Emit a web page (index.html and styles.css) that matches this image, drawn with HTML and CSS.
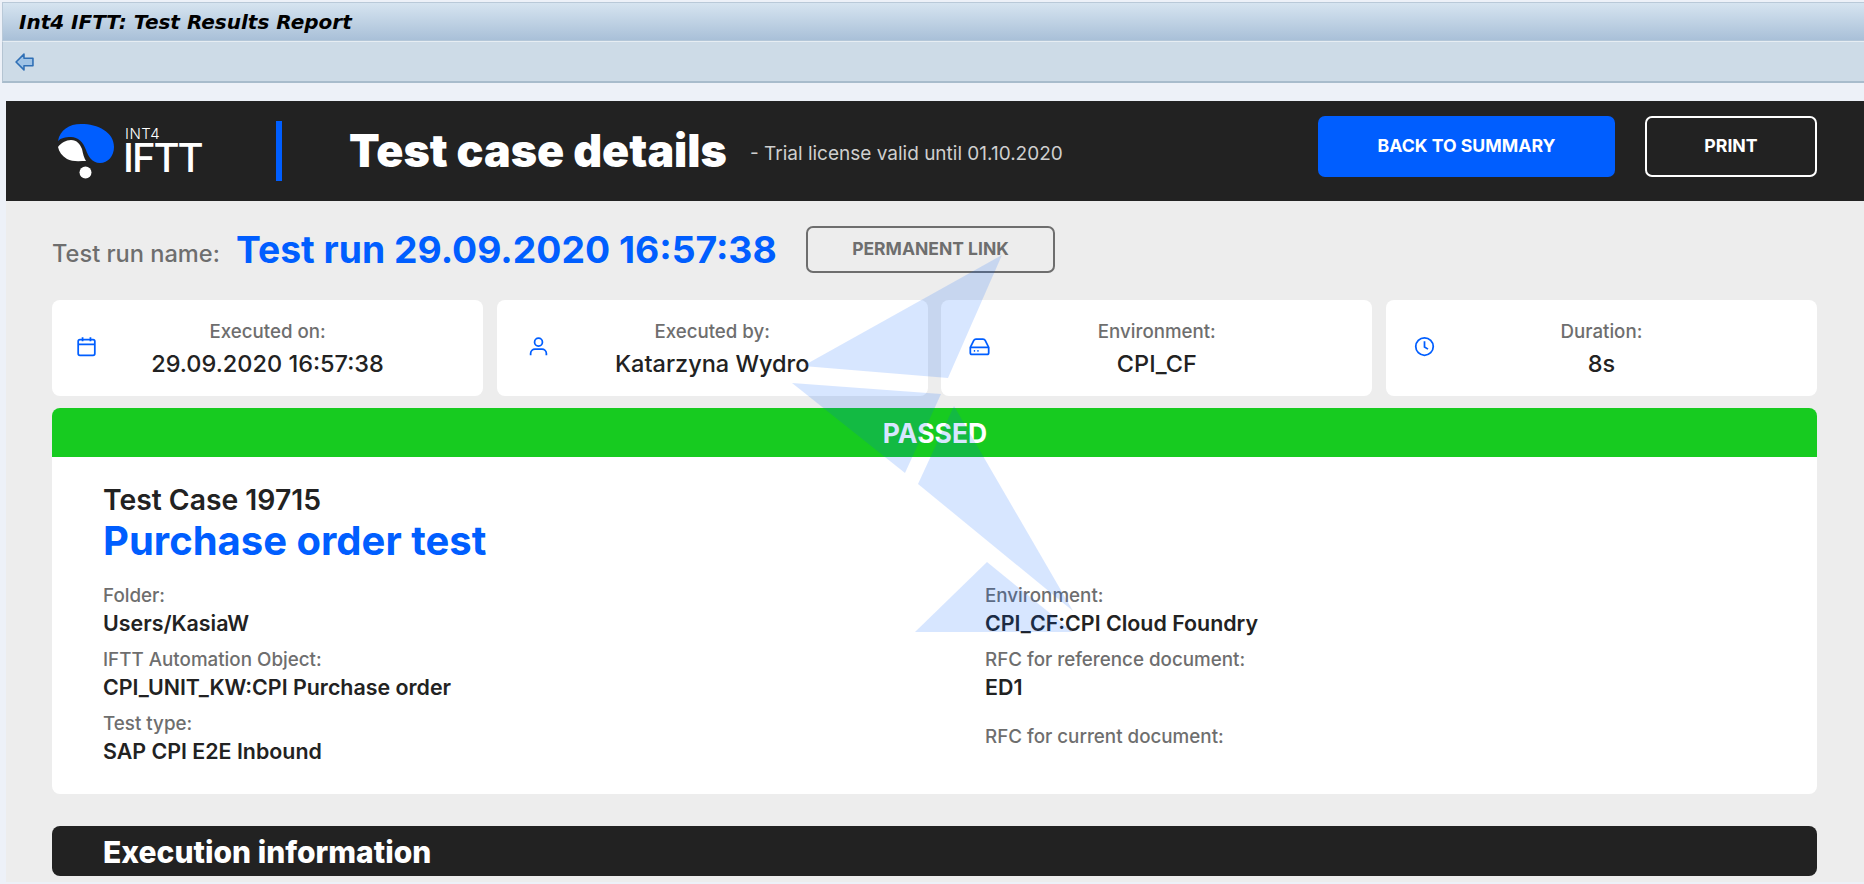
FILE: index.html
```html
<!DOCTYPE html>
<html lang="en">
<head>
<meta charset="utf-8">
<title>Int4 IFTT: Test Results Report</title>
<link rel="stylesheet" href="styles.css">
</head>
<body>
<div class="sap-title">Int4 IFTT: Test Results Report</div>
<div class="sap-toolbar">
  <svg class="sap-back" viewBox="0 0 18 17" aria-hidden="true"><path d="M8.5 1 1 8.5 8.5 16V12H17V5H8.5Z" fill="#9fc3e6" stroke="#2f6fb5" stroke-width="1.5" stroke-linejoin="round"/></svg>
</div>
<main class="page">
  <header class="top">
    <div class="logo">
      <svg class="logo-mark" viewBox="58 125 56 56" aria-hidden="true">
        <path d="M58 143C60 132 69 126 81 126C98 126 114 134 114 149C114 158 108 165 100 165C92 165 88 158 86 152C83 144 78 139 71 139C65 139 61 140 58 143Z" fill="#005eff"/>
        <path d="M58 149C61 145 66 142 71 142C77 142 80 146 82 151C83 156 84 160 86 163C80 163 72 164 67 161C62 158 59 154 58 149Z" fill="#fff"/>
        <circle cx="85.500" cy="174.500" r="6" fill="#fff"/>
      </svg>
      <div class="logo-text">
        <span class="logo-small">INT4</span>
        <span class="logo-big">IFTT</span>
      </div>
    </div>
    <span class="top-bar"></span>
    <h1 class="top-title">Test case details</h1>
    <span class="top-note">- Trial license valid until 01.10.2020</span>
    <div class="top-actions">
      <a class="btn btn-primary">BACK TO SUMMARY</a>
      <a class="btn btn-outline">PRINT</a>
    </div>
  </header>

  <section class="content">
    <div class="run-row">
      <span class="run-label">Test run name:</span>
      <span class="run-name">Test run 29.09.2020 16:57:38</span>
      <a class="btn-link">PERMANENT LINK</a>
    </div>

    <div class="cards">
      <div class="card">
        <svg class="card-icon icon-calendar" viewBox="0 0 24 24" aria-hidden="true"><rect x="2.500" y="4" width="19" height="18" rx="2"/><path d="M2.500 9.500H21.500M7.500 1.500V6M16.500 1.500V6"/></svg>
        <div class="card-body"><div class="card-label">Executed on:</div><div class="card-value">29.09.2020 16:57:38</div></div>
      </div>
      <div class="card">
        <svg class="card-icon icon-user" viewBox="0 0 24 24" aria-hidden="true"><circle cx="12" cy="7" r="4.500"/><path d="M3 22V20C3 17 5.500 15 8 15H16C18.500 15 21 17 21 20V22"/></svg>
        <div class="card-body"><div class="card-label">Executed by:</div><div class="card-value">Katarzyna Wydro</div></div>
      </div>
      <div class="card">
        <svg class="card-icon" viewBox="0 0 24 24" aria-hidden="true"><path d="M1.500 13 5.500 5C6 4 7 3.500 8 3.500H16C17 3.500 18 4 18.500 5L22.500 13V19C22.500 20 21.500 21 20.500 21H3.500C2.500 21 1.500 20 1.500 19Z"/><path d="M1.500 13H22.500M5.500 17H7M9.500 17H11"/></svg>
        <div class="card-body"><div class="card-label">Environment:</div><div class="card-value">CPI_CF</div></div>
      </div>
      <div class="card">
        <svg class="card-icon" viewBox="0 0 24 24" aria-hidden="true"><circle cx="12" cy="12" r="10"/><path d="M12 6V12.500L16 15"/></svg>
        <div class="card-body"><div class="card-label">Duration:</div><div class="card-value">8s</div></div>
      </div>
    </div>

    <div class="status">PASSED</div>
    <div class="panel">
      <div class="case-id">Test Case 19715</div>
      <h2 class="case-name">Purchase order test</h2>
      <div class="fields">
        <div class="field-col">
          <div class="field"><div class="field-label">Folder:</div><div class="field-value">Users/KasiaW</div></div>
          <div class="field"><div class="field-label">IFTT Automation Object:</div><div class="field-value">CPI_UNIT_KW:CPI Purchase order</div></div>
          <div class="field"><div class="field-label">Test type:</div><div class="field-value">SAP CPI E2E Inbound</div></div>
        </div>
        <div class="field-col">
          <div class="field"><div class="field-label">Environment:</div><div class="field-value">CPI_CF:CPI Cloud Foundry</div></div>
          <div class="field"><div class="field-label">RFC for reference document:</div><div class="field-value">ED1</div></div>
          <div class="field field-empty"><div class="field-label">RFC for current document:</div></div>
        </div>
      </div>
    </div>

    <div class="section-bar">Execution information</div>
  </section>
</main>
<svg class="watermark" viewBox="0 0 1864 884" aria-hidden="true">
  <path d="M1002 255 803 366 948 378Z"/>
  <path d="M792 383 941 394 905 473Z"/>
  <path d="M954 406 1073 611 918 484Z"/>
  <path d="M987 562 1073 632H915Z"/>
</svg>
</body>
</html>
```

FILE: styles.css
```css
* { box-sizing: border-box; }
html, body { margin: 0; height: 884px; overflow: hidden; }
body {
  position: relative;
  background: #edf1f8;
  font-family: "Inter", "Liberation Sans", sans-serif;
  color: #222;
  padding-top: 2px;
}

.sap-title {
  margin-left: 2px;
  height: 39px;
  padding: 0 0 0 16px;
  display: flex;
  align-items: center;
  font: italic 700 20px "DejaVu Sans", Verdana, sans-serif;
  color: #000;
  background: linear-gradient(#d6e4f0, #a9c0d8);
  border-top: 1px solid #b9c9d8;
  border-left: 1px solid #b9c9d8;
  border-bottom: 1px solid #b4c7d9;
}
.sap-toolbar {
  margin-left: 2px;
  height: 42px;
  padding-left: 12px;
  display: flex;
  align-items: center;
  background: #cddbe7;
  border-top: 1px solid #e6edf3;
  border-left: 1px solid #b4c4d2;
  border-bottom: 2px solid #a8bccc;
}
.sap-back { width: 19px; height: 18px; }

.page { margin: 18px 0 0 6px; background: #ededed; height: 781px; }

.top {
  height: 100px;
  background: #222;
  display: flex;
  align-items: center;
  padding: 0 47px 0 52px;
}
.logo { display: flex; align-items: flex-start; width: 218px; height: 56px; flex: none; }
.logo-mark { width: 56px; height: 56px; flex: none; }
.logo-text { display: flex; flex-direction: column; margin-left: 9px; color: #fff; }
.logo-small { font-size: 15px; font-weight: 300; line-height: 15px; margin: 3px 0 0 2px; letter-spacing: .5px; }
.logo-big { font-size: 40px; font-weight: 500; line-height: 34px; letter-spacing: -2px; }
.top-bar { width: 6px; height: 60px; background: #005eff; flex: none; }
.top-title { margin: 0 0 0 67px; font-size: 44.800px; font-weight: 900; color: #fff; line-height: 60px; }
.top-note { margin: 5px 0 0 23px; font-size: 19px; color: #cfcfcf; }
.top-actions { margin: 0 0 9px auto; display: flex; gap: 30px; }
.btn {
  height: 61px;
  border-radius: 7px;
  display: flex;
  align-items: center;
  justify-content: center;
  padding-bottom: 3px;
  color: #fff;
  font-size: 17.700px;
  font-weight: 700;
}
.btn-primary { width: 297px; background: #005eff; }
.btn-outline { width: 172px; border: 2px solid #fff; }

.content { padding: 25px 47px 0 46px; }
.run-row { display: flex; align-items: center; height: 47px; }
.run-label { font-size: 23.600px; font-weight: 500; color: #6e6e6e; width: 184px; padding-top: 8px; }
.run-name { font-size: 37.300px; font-weight: 700; color: #005eff; width: 570px; }
.btn-link {
  width: 249px;
  height: 47px;
  border: 2px solid #6e6e6e;
  border-radius: 7px;
  display: flex;
  align-items: center;
  justify-content: center;
  padding-bottom: 3px;
  color: #6e6e6e;
  font-size: 17.500px;
  font-weight: 700;
}

.cards { margin-top: 27px; display: grid; grid-template-columns: repeat(4, 1fr); gap: 13.500px; }
.card {
  height: 96px;
  background: #fff;
  border-radius: 8px;
  display: grid;
  grid-template-columns: 1fr auto 1fr;
  align-items: center;
  padding-left: 28px;
}
.card-icon { width: 21px; height: 23px; fill: none; stroke: #005eff; stroke-width: 2; margin-top: -4px; }
.icon-calendar { margin-left: -4px; }
.icon-user { margin-left: 3px; }
.card-body { grid-column: 2; text-align: center; margin-left: -28px; padding-top: 2px; }
.card-label { font-size: 18.700px; font-weight: 500; line-height: 24px; color: #6e6e6e; }
.card-value { font-size: 23.500px; font-weight: 500; line-height: 30px; margin-top: 5px; color: #222; }

.status {
  margin-top: 12px;
  height: 49px;
  background: #17cb20;
  border-radius: 8px 8px 0 0;
  display: flex;
  align-items: center;
  justify-content: center;
  padding-left: 1px;
  color: #fff;
  font-size: 26.500px;
  font-weight: 700;
}
.panel {
  height: 337px;
  background: #fff;
  border-radius: 0 0 8px 8px;
  padding: 26px 0 0 51px;
}
.case-id { font-size: 28.300px; font-weight: 600; line-height: 34px; color: #222; }
.case-name { margin: 0; font-size: 40px; font-weight: 700; line-height: 48px; color: #005eff; }
.fields { margin-top: 20px; display: grid; grid-template-columns: 882px 1fr; }
.field { height: 64px; }
.field-empty { padding-top: 13px; }
.field-label { font-size: 18.800px; font-weight: 500; line-height: 22px; color: #6e6e6e; }
.field-value { font-size: 21.400px; font-weight: 600; line-height: 26px; margin-top: 3px; color: #222; }

.section-bar {
  margin-top: 32px;
  height: 50px;
  background: #222;
  border-radius: 8px;
  padding: 2px 0 0 51px;
  display: flex;
  align-items: center;
  color: #fff;
  font-size: 30px;
  font-weight: 800;
}

.watermark { position: absolute; left: 0; top: 0; width: 1864px; height: 884px; pointer-events: none; }
.watermark path { fill: #005eff; fill-opacity: .157; }
```
